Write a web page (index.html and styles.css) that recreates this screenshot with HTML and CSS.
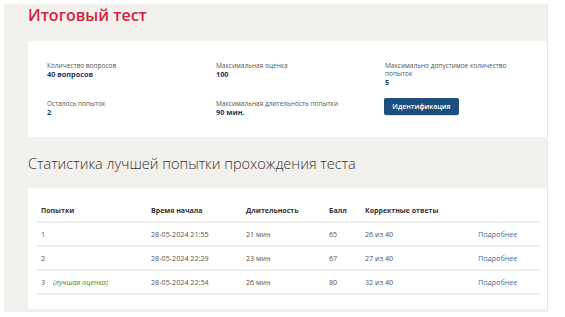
FILE: index.html
```html
<!DOCTYPE html>
<html lang="ru">
<head>
<meta charset="utf-8">
<title>Итоговый тест</title>
<link rel="stylesheet" href="styles.css">
</head>
<body>
<main class="panel">
  <h1 class="title">Итоговый тест</h1>
  <section class="card info">
    <div class="info-grid">
      <div class="item">
        <div class="label">Количество вопросов</div>
        <div class="value">40 вопросов</div>
      </div>
      <div class="item">
        <div class="label">Максимальная оценка</div>
        <div class="value">100</div>
      </div>
      <div class="item">
        <div class="label">Максимально допустимое количество попыток</div>
        <div class="value">5</div>
      </div>
      <div class="item">
        <div class="label">Осталось попыток</div>
        <div class="value">2</div>
      </div>
      <div class="item">
        <div class="label">Максимальная длительность попытки</div>
        <div class="value">90 мин.</div>
      </div>
      <div class="item">
        <button class="btn" type="button">Идентификация</button>
      </div>
    </div>
  </section>
  <h2 class="subtitle">Статистика лучшей попытки прохождения теста</h2>
  <section class="card stats">
    <table class="table">
      <thead>
        <tr>
          <th class="c1">Попытки</th>
          <th class="c2">Время начала</th>
          <th class="c3">Длительность</th>
          <th class="c4">Балл</th>
          <th class="c5">Корректные ответы</th>
          <th class="c6"></th>
        </tr>
      </thead>
      <tbody>
        <tr>
          <td>1</td>
          <td>28-05-2024 21:55</td>
          <td>21 мин</td>
          <td>65</td>
          <td>26 из 40</td>
          <td><a class="more" href="#">Подробнее</a></td>
        </tr>
        <tr>
          <td>2</td>
          <td>28-05-2024 22:29</td>
          <td>23 мин</td>
          <td>67</td>
          <td>27 из 40</td>
          <td><a class="more" href="#">Подробнее</a></td>
        </tr>
        <tr>
          <td>3 <span class="best">(лучшая оценка)</span></td>
          <td>28-05-2024 22:54</td>
          <td>26 мин</td>
          <td>80</td>
          <td>32 из 40</td>
          <td><a class="more" href="#">Подробнее</a></td>
        </tr>
      </tbody>
    </table>
  </section>
</main>
</body>
</html>
```

FILE: styles.css
```css
html, body {
  margin: 0;
  padding: 0;
  background: #ffffff;
}

body {
  font-family: "Open Sans", "Noto Sans", sans-serif;
  color: #444;
}

.panel {
  margin: 4px 0 0 4px;
  width: 544px;
  background: #f2f1ee;
  padding: 0 0 0 24px;
  box-sizing: border-box;
  height: 308px;
  border-right: 1px solid #e9e7e1;
}

.title {
  margin: 0;
  padding-top: 1px;
  height: 36px;
  font-size: 16px;
  font-weight: 600;
  color: #d4213d;
  line-height: 20px;
}

.card {
  background: #fff;
}

.info {
  height: 96px;
  padding: 20px 0 0 19px;
  box-sizing: border-box;
}

.info-grid {
  display: grid;
  grid-template-columns: 169px 169px 130px;
  grid-template-rows: 38px 30px;
}

.label {
  font-size: 6.5px;
  line-height: 8px;
  color: #555;
  padding-top: 1px;
}

.value {
  font-size: 7.3px;
  line-height: 9px;
  font-weight: 700;
  color: #1f3a64;
}

.btn {
  display: block;
  margin: -1px 0 0 -1px;
  width: 75px;
  height: 17px;
  border: 0;
  border-radius: 2px;
  background: #1d4f7e;
  color: #fff;
  font-family: "Open Sans", "Noto Sans", sans-serif;
  font-size: 7px;
  font-weight: 600;
  padding: 0;
  box-shadow: 0 1px 1px rgba(0,0,0,0.15);
}

.subtitle {
  margin: 0;
  padding-top: 17px;
  height: 51px;
  box-sizing: border-box;
  font-size: 14.5px;
  font-weight: 300;
  color: #333;
  line-height: 20px;
}

.stats {
  height: 121px;
  padding: 12px 7px 0 8px;
  box-sizing: border-box;
}

.table {
  width: 505px;
  border-collapse: collapse;
  font-size: 7.2px;
  color: #555;
}

.table th,
.table td {
  text-align: left;
  padding: 0 0 0 5px;
  height: 22px;
  border-bottom: 2px solid #efefef;
  white-space: nowrap;
}

.table th {
  font-weight: 700;
  color: #333;
  height: 21px;
  font-size: 7px;
}

.c1 { width: 105px; }
.c2 { width: 90px; }
.c3 { width: 78px; }
.c4 { width: 31px; }
.c5 { width: 108px; }

.best {
  margin-left: 6px;
  font-style: italic;
  color: #3d8b3d;
}

.more {
  color: #4b6d99;
  text-decoration: none;
}
```
